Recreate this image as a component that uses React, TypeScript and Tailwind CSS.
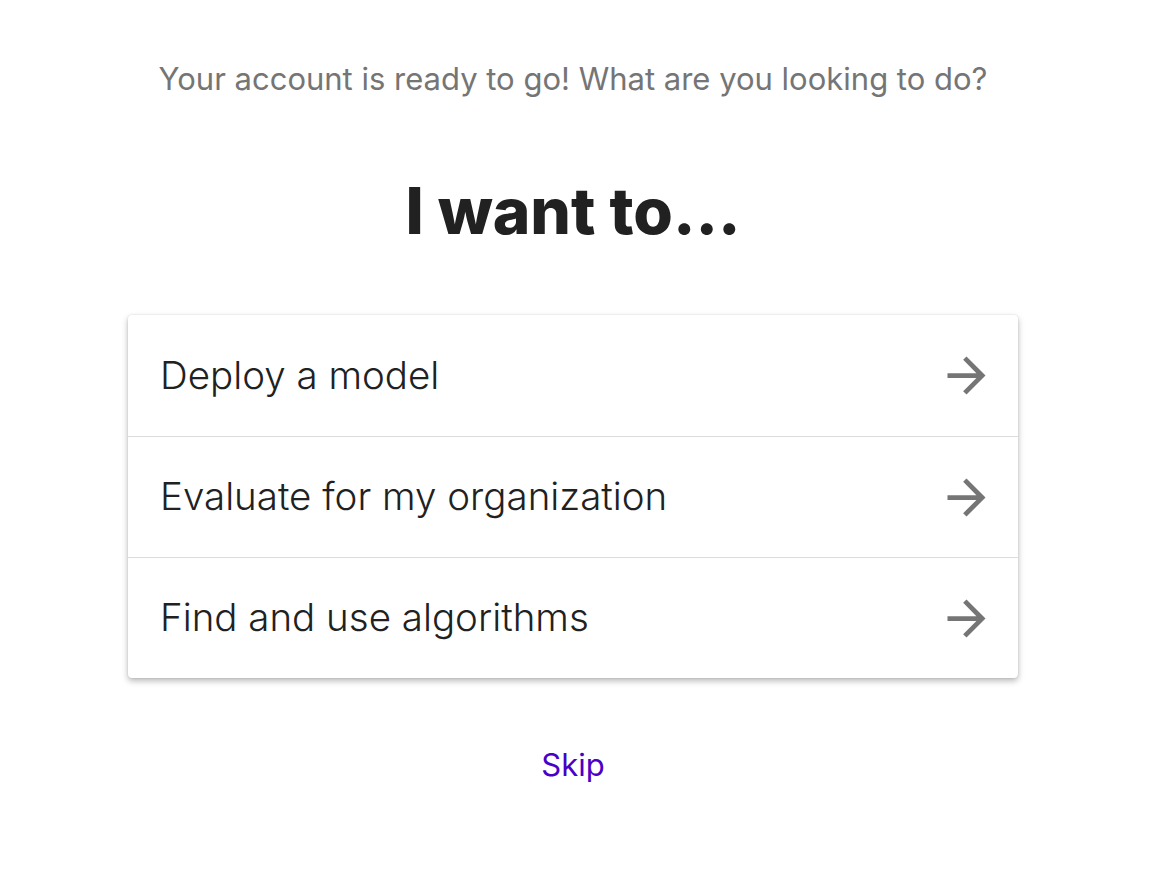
const options = ['Deploy a model', 'Evaluate for my organization', 'Find and use algorithms'];

function ArrowForward() {
  return (
    <svg width="57" height="57" viewBox="0 0 24 24" className="shrink-0 fill-[#757575]">
      <path d="M12 4l-1.41 1.41L16.17 11H4v2h12.17l-5.58 5.59L12 20l8-8z" />
    </svg>
  );
}

export default function App() {
  return (
    <div className="min-h-screen bg-white flex flex-col items-center pt-[59px] pr-[20px] font-['Inter','Noto_Sans',sans-serif]">
      <p className="text-[31px] leading-[40px] text-[#757575]">
        Your account is ready to go! What are you looking to do?
      </p>
      <h1 className="mt-[76px] text-[64px] leading-[72px] font-extrabold text-[#212121]">
        I want to...
      </h1>
      <div className="mt-[68px] w-[890px] bg-white rounded-[4px] shadow-[0_3px_6px_rgba(0,0,0,0.28),0_0_2px_rgba(0,0,0,0.12)] flex flex-col">
        {options.map((label, i) => (
          <button
            key={label}
            className={`h-[121px] flex items-center justify-between pl-8 pr-[23px] text-left ${i > 0 ? 'border-t border-[#dcdcdc]' : ''}`}
          >
            <span className="text-[38.5px] font-light text-[#212121]">{label}</span>
            <ArrowForward />
          </button>
        ))}
      </div>
      <a href="#" className="mt-[67px] text-[31px] leading-[40px] text-[#4a00c8]">
        Skip
      </a>
    </div>
  );
}
